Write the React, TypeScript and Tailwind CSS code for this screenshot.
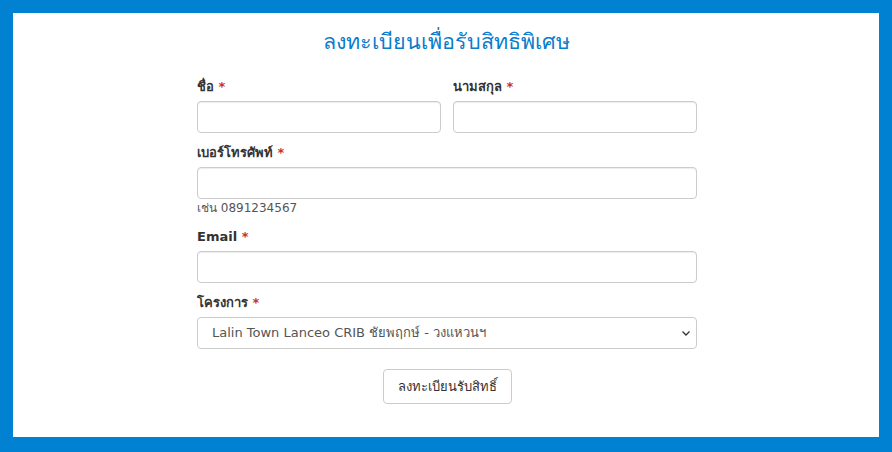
import React from 'react'

const font = { fontFamily: '"DejaVu Sans", "Noto Sans", sans-serif' }

function Label({ text }: { text: string }) {
  return (
    <label className="flex items-center h-[20px] text-[13px] font-bold leading-[20px] text-[#333] mb-[4px] overflow-visible">
      {text}&nbsp;<span className="text-[#c9302c]">*</span>
    </label>
  )
}

function Input() {
  return (
    <input
      type="text"
      className="block w-full h-[32px] rounded-[4px] border border-[#ccc] bg-white px-3 shadow-[inset_0_1px_1px_rgba(0,0,0,0.075)] outline-none"
    />
  )
}

export default function App() {
  return (
    <div className="w-[892px] h-[452px] bg-[#0081d2] pt-[13px] px-[13px] pb-[15px]" style={font}>
      <div className="h-full bg-white flex flex-col items-center">
        <h1 className="mt-[14px] h-[30px] flex items-center text-[21.5px] leading-[30px] text-[#0a7ccc]">
          ลงทะเบียนเพื่อรับสิทธิพิเศษ
        </h1>

        <form className="w-[500px] ml-[2px] mt-[20px] flex flex-col">
          <div className="grid grid-cols-2 gap-x-[12px]">
            <div>
              <Label text="ชื่อ" />
              <Input />
            </div>
            <div>
              <Label text="นามสกุล" />
              <Input />
            </div>
          </div>

          <div className="mt-[10px]">
            <Label text="เบอร์โทรศัพท์" />
            <Input />
            <p className="h-[18px] flex items-center text-[12px] text-[#555]">เช่น 0891234567</p>
          </div>

          <div className="mt-[10px]">
            <Label text="Email" />
            <Input />
          </div>

          <div className="mt-[10px]">
            <Label text="โครงการ" />
            <div className="relative">
              <select className="block w-full h-[32px] appearance-none rounded-[4px] border border-[#ccc] bg-white pl-[14px] pr-8 text-[13px] text-[#555] outline-none">
                <option>Lalin Town Lanceo CRIB ชัยพฤกษ์ - วงแหวนฯ</option>
              </select>
              <svg
                className="absolute right-[6px] top-[12px] w-[10px] h-[8px] pointer-events-none"
                viewBox="0 0 10 8"
                fill="none"
                stroke="#333"
                strokeWidth="1.3"
              >
                <path d="M1.5 2.5 L5 6 L8.5 2.5" />
              </svg>
            </div>
          </div>

          <div className="mt-[20px] flex justify-center">
            <button
              type="button"
              className="h-[35px] px-[14px] rounded-[4px] border border-[#ccc] bg-white text-[13px] text-[#333]"
            >
              ลงทะเบียนรับสิทธิ์
            </button>
          </div>
        </form>
      </div>
    </div>
  )
}
